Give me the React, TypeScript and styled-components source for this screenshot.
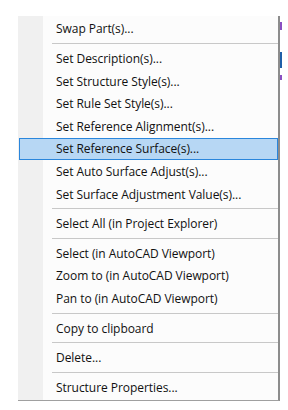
import { createGlobalStyle } from "styled-components"
import styled from "styled-components"

const GlobalStyle = createGlobalStyle`
  html, body {
    margin: 0;
    padding: 0;
    background: #ffffff;
  }
  body {
    font-family: "Open Sans", "Noto Sans", "Liberation Sans", sans-serif;
  }
`

const Page = styled.div`
  width: 288px;
  height: 410px;
  padding: 16px 0 0 18px;
  box-sizing: border-box;
  display: flex;
  align-items: flex-start;
`

const Menu = styled.ul`
  list-style: none;
  margin: 0;
  padding: 1.7px 0;
  width: 262px;
  box-sizing: border-box;
  background: linear-gradient(to right, #f0f0f0 0 25px, #fcfcfc 25px);
  border-right: 2px solid #8c8c8c;
  border-bottom: 1px solid #a0a0a0;
`

const Item = styled.li<{ $active?: boolean }>`
  height: 22.6px;
  box-sizing: border-box;
  display: flex;
  align-items: center;
  padding-left: 36px;
  margin-left: 1px;
  font-size: 12px;
  letter-spacing: -0.05px;
  color: #111111;
  white-space: nowrap;
  background: ${(p) => (p.$active ? "#b7d7f4" : "transparent")};
  border: 1px solid ${(p) => (p.$active ? "#2a86dc" : "transparent")};
`

const Separator = styled.li`
  height: 7px;
  display: flex;
  align-items: center;
  padding-left: 34px;

  &::after {
    content: "";
    flex: 1;
    height: 1px;
    background: #c8c8c8;
  }
`

const Backdrop = styled.div`
  width: 3px;
  display: flex;
  flex-direction: column;
  padding-top: 6px;
`

const Fleck = styled.span<{ $h: number; $c: string; $gap: number }>`
  display: block;
  width: 2px;
  height: ${(p) => p.$h}px;
  margin-top: ${(p) => p.$gap}px;
  background: ${(p) => p.$c};
`

type Entry = { label?: string; sep?: boolean; active?: boolean }

const entries: Entry[] = [
  { label: "Swap Part(s)..." },
  { sep: true },
  { label: "Set Description(s)..." },
  { label: "Set Structure Style(s)..." },
  { label: "Set Rule Set Style(s)..." },
  { label: "Set Reference Alignment(s)..." },
  { label: "Set Reference Surface(s)...", active: true },
  { label: "Set Auto Surface Adjust(s)..." },
  { label: "Set Surface Adjustment Value(s)..." },
  { sep: true },
  { label: "Select All (in Project Explorer)" },
  { sep: true },
  { label: "Select (in AutoCAD Viewport)" },
  { label: "Zoom to (in AutoCAD Viewport)" },
  { label: "Pan to (in AutoCAD Viewport)" },
  { sep: true },
  { label: "Copy to clipboard" },
  { sep: true },
  { label: "Delete..." },
  { sep: true },
  { label: "Structure Properties..." },
]

const App = () => {
  return (
    <>
      <GlobalStyle />
      <Page>
        <Menu>
          {entries.map((e, i) =>
            e.sep ? (
              <Separator key={i} />
            ) : (
              <Item key={i} $active={e.active}>
                {e.label}
              </Item>
            )
          )}
        </Menu>
        <Backdrop>
          <Fleck $h={8} $c="#8a4fc2" $gap={0} />
          <Fleck $h={16} $c="#1f5fa8" $gap={22} />
          <Fleck $h={5} $c="#8a4fc2" $gap={7} />
        </Backdrop>
      </Page>
    </>
  )
}

export default App
